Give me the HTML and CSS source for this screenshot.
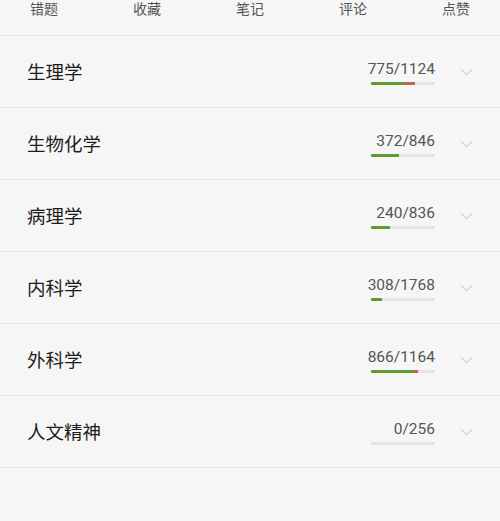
FILE: index.html
```html
<!DOCTYPE html>
<html lang="zh">
<head>
<meta charset="utf-8">
<link rel="stylesheet" href="styles.css">
</head>
<body>
<div class="page">
  <div class="tabs">
    <span>错题</span><span>收藏</span><span>笔记</span><span>评论</span><span>点赞</span>
  </div>
  <ul class="list">
    <li class="row">
      <span class="title">生理学</span>
      <div class="stat">
        <span class="num">775/1124</span>
        <div class="track"><div class="ok" style="width:52%"></div><div class="bad" style="width:17%"></div></div>
      </div>
      <svg class="chev" viewBox="0 0 14 8"><path d="M1 1l6 6 6-6"/></svg>
    </li>
    <li class="row">
      <span class="title">生物化学</span>
      <div class="stat">
        <span class="num">372/846</span>
        <div class="track"><div class="ok" style="width:44%"></div></div>
      </div>
      <svg class="chev" viewBox="0 0 14 8"><path d="M1 1l6 6 6-6"/></svg>
    </li>
    <li class="row">
      <span class="title">病理学</span>
      <div class="stat">
        <span class="num">240/836</span>
        <div class="track"><div class="ok" style="width:29%"></div></div>
      </div>
      <svg class="chev" viewBox="0 0 14 8"><path d="M1 1l6 6 6-6"/></svg>
    </li>
    <li class="row">
      <span class="title">内科学</span>
      <div class="stat">
        <span class="num">308/1768</span>
        <div class="track"><div class="ok" style="width:17%"></div></div>
      </div>
      <svg class="chev" viewBox="0 0 14 8"><path d="M1 1l6 6 6-6"/></svg>
    </li>
    <li class="row">
      <span class="title">外科学</span>
      <div class="stat">
        <span class="num">866/1164</span>
        <div class="track"><div class="ok" style="width:66%"></div><div class="bad" style="width:8%"></div></div>
      </div>
      <svg class="chev" viewBox="0 0 14 8"><path d="M1 1l6 6 6-6"/></svg>
    </li>
    <li class="row">
      <span class="title">人文精神</span>
      <div class="stat">
        <span class="num">0/256</span>
        <div class="track"></div>
      </div>
      <svg class="chev" viewBox="0 0 14 8"><path d="M1 1l6 6 6-6"/></svg>
    </li>
  </ul>
</div>
</body>
</html>
```
FILE: styles.css
```css
html, body {
  margin: 0;
  padding: 0;
  background: #f6f6f6;
}
body {
  font-family: "Noto Sans CJK SC", "Noto Sans", sans-serif;
  width: 500px;
  height: 521px;
  overflow: hidden;
}
.page {
  background: #f6f6f6;
}
.tabs {
  display: flex;
  justify-content: space-between;
  padding: 1px 30px 0;
  height: 34px;
  border-bottom: 1px solid #e9e9e9;
  font-size: 14px;
  line-height: 15px;
  color: #555;
}
.tabs span {
  display: block;
  height: 15px;
}
.list {
  list-style: none;
  margin: 0;
  padding: 0;
}
.row {
  display: flex;
  align-items: center;
  height: 71px;
  border-bottom: 1px solid #e9e9e9;
  padding: 0 27px;
}
.title {
  flex: 1;
  font-size: 18.5px;
  color: #1c1c1c;
  line-height: 24px;
  margin-bottom: 2px;
}
.stat {
  display: flex;
  flex-direction: column;
  align-items: flex-end;
  margin-top: 2px;
}
.num {
  font-family: Roboto, "Noto Sans", sans-serif;
  font-size: 15.5px;
  line-height: 18px;
  color: #555;
}
.track {
  display: flex;
  width: 64px;
  height: 3px;
  margin-top: 4px;
  background: #e4e4e4;
  border-radius: 1px;
  overflow: hidden;
}
.ok {
  background: #5e9e2e;
  height: 100%;
}
.bad {
  background: #c9604a;
  height: 100%;
}
.chev {
  width: 13px;
  height: 8px;
  margin-left: 25px;
  fill: none;
  stroke: #cfcfcf;
  stroke-width: 1.2;
}
```
